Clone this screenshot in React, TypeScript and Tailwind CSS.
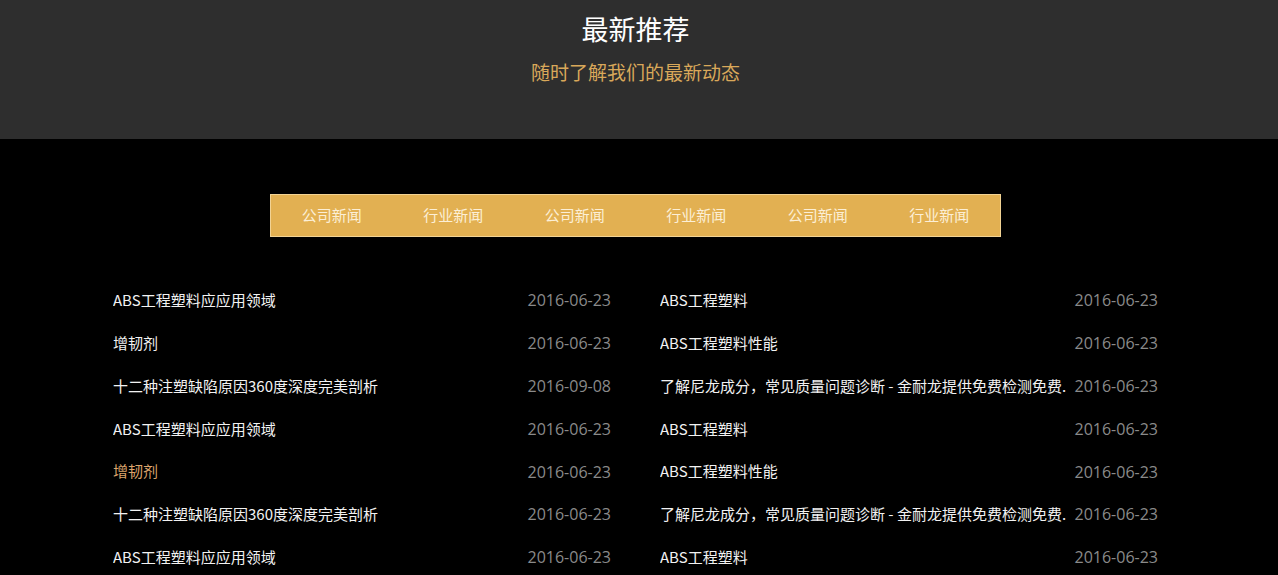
const tabs = ['公司新闻', '行业新闻', '公司新闻', '行业新闻', '公司新闻', '行业新闻'];

type NewsItem = { title: string; date: string; active?: boolean };

const longTitle = '了解尼龙成分，常见质量问题诊断 - 金耐龙提供免费检测免费.';

const leftNews: NewsItem[] = [
  { title: 'ABS工程塑料应应用领域', date: '2016-06-23' },
  { title: '增韧剂', date: '2016-06-23' },
  { title: '十二种注塑缺陷原因360度深度完美剖析', date: '2016-09-08' },
  { title: 'ABS工程塑料应应用领域', date: '2016-06-23' },
  { title: '增韧剂', date: '2016-06-23', active: true },
  { title: '十二种注塑缺陷原因360度深度完美剖析', date: '2016-06-23' },
  { title: 'ABS工程塑料应应用领域', date: '2016-06-23' },
];

const rightNews: NewsItem[] = [
  { title: 'ABS工程塑料', date: '2016-06-23' },
  { title: 'ABS工程塑料性能', date: '2016-06-23' },
  { title: longTitle, date: '2016-06-23' },
  { title: 'ABS工程塑料', date: '2016-06-23' },
  { title: 'ABS工程塑料性能', date: '2016-06-23' },
  { title: longTitle, date: '2016-06-23' },
  { title: 'ABS工程塑料', date: '2016-06-23' },
];

const cjk = "font-['Noto_Sans_CJK_SC',sans-serif]";

function NewsList({ items }: { items: NewsItem[] }) {
  return (
    <ul className="w-[498px]">
      {items.map((n, i) => (
        <li key={i} className="flex h-[42.8px] items-center justify-between">
          <span
            className={`${cjk} block max-w-[414px] overflow-hidden whitespace-nowrap text-[15px] ${
              n.active ? 'text-[#dca46c]' : 'text-[#f2f2f2]'
            }`}
          >
            {n.title}
          </span>
          <span className="font-['Open_Sans',sans-serif] text-[16px] text-[#8a8a8a]">{n.date}</span>
        </li>
      ))}
    </ul>
  );
}

export default function App() {
  return (
    <div className="h-[575px] overflow-hidden bg-black">
      <header className="h-[139px] bg-[#2e2e2e]">
        <div className="flex w-[1271px] flex-col items-center pt-[11px]">
          <h1 className={`${cjk} text-[27px] leading-[36px] text-white`}>最新推荐</h1>
          <p className={`${cjk} mt-[13px] text-[19px] leading-[24px] text-[#d9a85a]`}>随时了解我们的最新动态</p>
        </div>
      </header>

      <section className="w-[1271px] pt-[55px]">
        <nav className="mx-auto flex h-[43px] w-[731px] border border-[#f2d394] bg-[#e2b052]">
          {tabs.map((t, i) => (
            <a
              key={i}
              className={`${cjk} flex flex-1 items-center justify-center text-[15px] text-[#fcefd6]`}
            >
              {t}
            </a>
          ))}
        </nav>

        <div className="mx-auto mt-[42px] flex w-[1045px] justify-between">
          <NewsList items={leftNews} />
          <NewsList items={rightNews} />
        </div>
      </section>
    </div>
  );
}
